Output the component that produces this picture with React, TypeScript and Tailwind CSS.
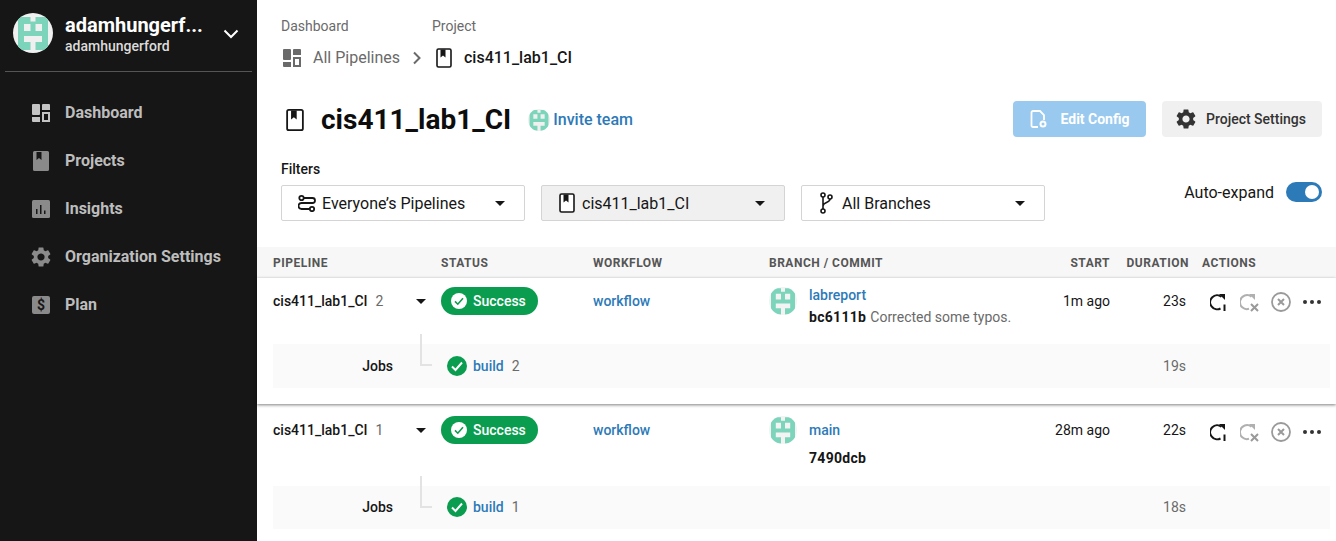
import React from "react";
import { MdSettings } from "react-icons/md";

const Face = ({ size, bg = "#f0f0f0", className = "", tight }: { size: number; bg?: string; className?: string; tight?: boolean }) => (
  <svg width={size} height={size} viewBox={tight ? "2.5 2.5 35 35" : "0 0 40 40"} className={`rounded-full ${className}`}>
    <rect width="40" height="40" fill={bg} />
    <path
      fillRule="evenodd"
      fill="#7cd5bb"
      d="M9 4h8.500v4.500h5V4H31a4 4 0 0 1 4 4v25a4 4 0 0 1-4 4h-8.500v-8h6.500v-6H11v6h6.500v8H9a4 4 0 0 1-4-4V8a4 4 0 0 1 4-4zM11 11v7h6.500v-7zM22.500 11v7H29v-7z"
    />
  </svg>
);

const DashIcon = ({ color, size = 18 }: { color: string; size?: number }) => (
  <svg width={size} height={size} viewBox="0 0 18 18" fill={color}>
    <path d="M1 0h6a1 1 0 0 1 1 1v9a1 1 0 0 1-1 1H1a1 1 0 0 1-1-1V1a1 1 0 0 1 1-1z" />
    <path d="M11 0h6a1 1 0 0 1 1 1v5H10V1a1 1 0 0 1 1-1z" />
    <path d="M0 13h8v5H1a1 1 0 0 1-1-1z" />
    <path fillRule="evenodd" d="M10 8h8v10h-8zM12 10v6h4v-6z" />
  </svg>
);

const BookOutline = ({ w = 16, h = 20 }: { w?: number; h?: number }) => (
  <svg width={w} height={h} viewBox="0 0 16 20">
    <rect x="1" y="1" width="14" height="18" rx="1.500" fill="#fff" stroke="#161616" strokeWidth="1.600" />
    <path d="M4.500 1.500h5v8l-2.500-2-2.500 2z" fill="#161616" />
  </svg>
);

const BookSolid = () => (
  <svg width="16" height="20" viewBox="0 0 16 20">
    <path
      fill="#8a8a8a"
      fillRule="evenodd"
      d="M1.500 0h13A1.500 1.500 0 0 1 16 1.500v17a1.500 1.500 0 0 1-1.500 1.500h-13A1.500 1.500 0 0 1 0 18.500v-17A1.500 1.500 0 0 1 1.500 0zM3.500 1v8l2.500-2 2.500 2V1z"
    />
  </svg>
);

const InsightsIcon = () => (
  <svg width="18" height="18" viewBox="0 0 18 18">
    <rect width="18" height="18" rx="1.500" fill="#8a8a8a" />
    <path d="M4 9h1.500v5H4zM8 5h1.500v9H8zM12 10.500h1.500V14H12z" fill="#161616" />
  </svg>
);

const Caret = ({ color = "#161616" }: { color?: string }) => (
  <svg width="10" height="5" viewBox="0 0 10 5">
    <path d="M0 0h10L5 5z" fill={color} />
  </svg>
);

const Check = ({ size, ring, tick }: { size: number; ring: string; tick: string }) => (
  <svg width={size} height={size} viewBox="0 0 20 20">
    <circle cx="10" cy="10" r="10" fill={ring} />
    <path d="M5 10.500l3.500 3.500 6.500-7.500" fill="none" stroke={tick} strokeWidth="2" />
  </svg>
);

const Retry = () => (
  <svg width="18" height="20" viewBox="0 0 18 20" fill="none">
    <path d="M11.500 4.800A7 7 0 1 0 10.500 16.500" stroke="#161616" strokeWidth="2" />
    <path d="M9 2h6v6z" fill="#161616" />
    <path d="M14.500 12.500v6.500" stroke="#161616" strokeWidth="2" />
  </svg>
);

const RetryOff = () => (
  <svg width="19" height="20" viewBox="0 0 19 20" fill="none">
    <path d="M11.500 4.800A7 7 0 1 0 9 16.800" stroke="#b0b0b0" strokeWidth="2" />
    <path d="M9 2h6v6z" fill="#b0b0b0" />
    <path d="M11 12l7 7M18 12l-7 7" stroke="#9a9a9a" strokeWidth="2" />
  </svg>
);

const Cancel = () => (
  <svg width="20" height="20" viewBox="0 0 20 20" fill="none">
    <circle cx="10" cy="10" r="9" stroke="#9a9a9a" strokeWidth="1.800" />
    <path d="M7 7l6 6M13 7l-6 6" stroke="#9a9a9a" strokeWidth="2" />
  </svg>
);

const Dots = () => (
  <svg width="18" height="4" viewBox="0 0 18 4" fill="#333">
    <circle cx="2" cy="2" r="2" />
    <circle cx="9" cy="2" r="2" />
    <circle cx="16" cy="2" r="2" />
  </svg>
);

const Nav = ({ icon, label }: { icon: React.ReactNode; label: string }) => (
  <div className="flex h-12 items-center">
    <div className="ml-[32px] mr-[15px] flex w-[18px] items-center justify-center">{icon}</div>
    <span className="text-base font-bold text-[#bdbdbd]">{label}</span>
  </div>
);

const Select = ({ icon, label, active }: { icon: React.ReactNode; label: string; active?: boolean }) => (
  <div
    className={`flex h-9 w-[244px] items-center rounded-[2px] border border-[#d4d4d4] pl-[15px] pr-[19px] ${active ? "bg-[#f0f0f0]" : "bg-white"}`}
  >
    <div className="mr-[5px] flex w-[20px] justify-center">{icon}</div>
    <span className="flex-1 pt-px text-base text-[#161616]">{label}</span>
    <Caret />
  </div>
);

const Row = ({
  name, num, branch, commit, msg, start, dur, jobDur, first,
}: {
  name: string; num: string; branch: string; commit: string; msg?: string; start: string; dur: string; jobDur: string; first?: boolean;
}) => (
  <div className={first ? "relative h-[126px] shadow-[0_1px_3px_rgba(0,0,0,0.5)]" : "relative mt-[2px] h-[135px]"}>
    <div className={`flex pl-4 ${first ? "h-[66px] pt-[9px]" : "h-[80px] pt-[10px]"}`}>
      <div className="flex h-7 w-[168px] items-center pr-[15px] text-sm">
        <span className="font-medium text-[#161616]">{name}</span>
        <span className="ml-2 flex-1 text-sm text-[#6a6a6a]">{num}</span>
        <Caret />
      </div>
      <div className="w-[152px]">
        <div className="flex h-7 w-[97px] items-center rounded-full bg-[#0a9d4f] pl-[10px]">
          <Check size={16} ring="#fff" tick="#0a9d4f" />
          <span className="ml-[6px] text-sm font-medium text-white">Success</span>
        </div>
      </div>
      <div className="flex h-7 w-[176px] items-center text-sm font-medium text-[#2d7ab8]">workflow</div>
      <div className="flex w-[269px]">
        <Face size={28} className="mr-[12px]" bg="#f3f3f3" tight />
        <div>
          <div className={`flex items-center text-sm font-medium text-[#2d7ab8] ${first ? "h-4" : "h-7"}`}>{branch}</div>
          <div className="mt-[5px] flex h-[18px] items-center text-sm">
            <span className="font-bold tracking-[0.3px] text-[#161616]">{commit}</span>
            {msg && <span className="ml-1 text-[#6a6a6a]">{msg}</span>}
          </div>
        </div>
      </div>
      <div className="flex h-7 w-[72px] items-center justify-end whitespace-nowrap text-sm text-[#161616]">{start}</div>
      <div className="flex h-7 w-[76px] items-center justify-end text-sm text-[#161616]">{dur}</div>
      <div className={`ml-[24px] flex items-center ${first ? "h-[30px]" : "h-[32px]"}`}>
        <Retry />
        <span className="ml-[12px]"><RetryOff /></span>
        <span className="ml-[12px]"><Cancel /></span>
        <span className="ml-[12px]"><Dots /></span>
      </div>
    </div>
    <div className={`ml-4 mr-[6px] flex items-center bg-[#fafafa] ${first ? "h-[44px]" : "h-[43px] pb-px"}`}>
      <div className="w-[120px] text-right text-sm font-medium text-[#161616]">Jobs</div>
      <div className="ml-[54px]"><Check size={20} ring="#0a9d4f" tick="#fff" /></div>
      <span className="ml-[6px] text-sm font-medium text-[#2d7ab8]">build</span>
      <span className="ml-2 flex-1 text-sm text-[#6a6a6a]">{num}</span>
      <span className="mr-[144px] text-sm text-[#6a6a6a]">{jobDur}</span>
    </div>
    <div className={`absolute left-[163px] h-[32px] w-[12px] border-b-2 border-l-2 border-[#e3e3e3] ${first ? "top-[56px]" : "top-[70px]"}`} />
  </div>
);

export default function App() {
  return (
    <div className="flex h-[541px] w-[1336px] overflow-hidden bg-white font-['Roboto',sans-serif]">
      <aside className="w-[257px] shrink-0 bg-[#161616]">
        <div className="mx-[5px] flex h-[72px] items-center border-b border-[#555] pb-[5px] pl-2 pr-[9px]">
          <Face size={40} />
          <div className="ml-3 flex-1 leading-none">
            <div className="text-[20px] leading-6 font-bold text-white">adamhungerf...</div>
            <div className="pt-px text-sm leading-[16px] font-medium text-[#dcdcdc]">adamhungerford</div>
          </div>
          <svg width="16" height="10" viewBox="0 0 16 10" fill="none" className="mr-1 mt-[2px]">
            <path d="M1.500 1.500L8 8l6.500-6.500" stroke="#fff" strokeWidth="2" />
          </svg>
        </div>
        <nav className="mt-[17px]">
          <Nav icon={<DashIcon color="#c4c4c4" />} label="Dashboard" />
          <Nav icon={<BookSolid />} label="Projects" />
          <Nav icon={<InsightsIcon />} label="Insights" />
          <Nav icon={<MdSettings size={24} color="#8a8a8a" className="shrink-0" />} label="Organization Settings" />
          <Nav
            icon={
              <div className="flex h-[18px] w-[18px] items-center justify-center rounded-[2px] bg-[#8a8a8a] text-sm font-bold text-[#161616]">$</div>
            }
            label="Plan"
          />
        </nav>
      </aside>
      <main className="min-w-0 flex-1">
        <div className="px-6 pt-[18px]">
          <div className="flex h-4 items-center text-sm text-[#6a6a6a]">
            <span className="w-[151px]">Dashboard</span>
            <span>Project</span>
          </div>
          <div className="mt-[14px] flex h-[20px] items-center text-base">
            <span className="ml-[2px]"><DashIcon color="#6a6a6a" /></span>
            <span className="ml-3 text-[#6a6a6a]">All Pipelines</span>
            <svg width="10" height="14" viewBox="0 0 10 14" fill="none" className="ml-[12px] mr-[14px]">
              <path d="M2 1.500L7.500 7 2 12.500" stroke="#6a6a6a" strokeWidth="2" />
            </svg>
            <BookOutline />
            <span className="ml-3 font-medium text-[#161616]">cis411_lab1_CI</span>
          </div>
          <div className="mt-[33px] flex h-[38px] items-center">
            <span className="ml-[5px]"><BookOutline w={18} h={24} /></span>
            <span className="ml-[17px] text-[28px] font-bold text-[#0d0d0d]">cis411_lab1_CI</span>
            <Face size={22} className="ml-[17px]" bg="#f0f0f0" tight />
            <span className="ml-[3px] text-base font-medium text-[#2d7ab8]">Invite team</span>
            <div className="ml-auto mb-[2px] mr-[-10px] flex gap-4">
              <div className="flex h-9 w-[133px] items-center justify-center rounded bg-[#99c9ee] text-sm font-bold text-white">
                <svg width="18" height="20" viewBox="0 0 18 20" fill="none" className="mr-[13px]">
                  <path d="M8 18H3a1.500 1.500 0 0 1-1.500-1.500v-13A1.500 1.500 0 0 1 3 2h7l4 4v5" stroke="#fff" strokeWidth="1.800" />
                  <circle cx="13" cy="15" r="2.500" stroke="#fff" strokeWidth="2" />
                </svg>
                Edit Config
              </div>
              <div className="flex h-9 w-[160px] items-center rounded bg-[#f0f0f0] pl-3 text-sm font-medium text-[#333]">
                <MdSettings size={24} color="#333" className="mr-[8px]" />
                Project Settings
              </div>
            </div>
          </div>
          <div className="mt-[22px] flex h-[16px] items-center text-sm font-medium text-[#161616]">Filters</div>
          <div className="mt-2 flex items-start gap-4">
            <Select
              label="Everyone’s Pipelines"
              icon={
                <svg width="18" height="18" viewBox="0 0 18 18" fill="none" stroke="#161616" strokeWidth="1.800">
                  <path d="M6 4h8.500a2.500 2.500 0 0 1 0 5h-11a3 3 0 0 0 0 6H11" />
                  <circle cx="3.500" cy="4" r="2.200" />
                  <circle cx="14" cy="15" r="2.200" />
                </svg>
              }
            />
            <Select label="cis411_lab1_CI" active icon={<BookOutline />} />
            <Select
              label="All Branches"
              icon={
                <svg width="14" height="22" viewBox="0 0 14 22" fill="none" stroke="#161616" strokeWidth="1.600" className="-ml-[2px]">
                  <circle cx="4" cy="19" r="2" />
                  <circle cx="4" cy="3" r="2" />
                  <circle cx="11" cy="5" r="2" />
                  <path d="M4 5v12M4 14c0-4 7-3 7-7" />
                </svg>
              }
            />
            <div className="ml-auto mr-[-10px] mt-[-5px] flex h-6 items-center">
              <span className="pt-[2px] text-base text-[#161616]">Auto-expand</span>
              <div className="ml-[12px] flex h-5 w-9 items-center justify-end rounded-full bg-[#2d7ab8] pr-[3px]">
                <div className="h-[14px] w-[14px] rounded-full bg-white" />
              </div>
            </div>
          </div>
        </div>
        <div className="mt-[26px] flex h-[31px] items-center bg-[#f7f7f7] pl-4 text-xs font-bold tracking-[0.5px] text-[#555]">
          <span className="w-[168px]">PIPELINE</span>
          <span className="w-[152px]">STATUS</span>
          <span className="w-[176px]">WORKFLOW</span>
          <span className="w-[269px]">BRANCH / COMMIT</span>
          <span className="w-[72px] text-right">START</span>
          <span className="w-[79px] text-right">DURATION</span>
          <span className="ml-[13px]">ACTIONS</span>
        </div>
        <Row first name="cis411_lab1_CI" num="2" branch="labreport" commit="bc6111b" msg="Corrected some typos." start="1m ago" dur="23s" jobDur="19s" />
        <Row name="cis411_lab1_CI" num="1" branch="main" commit="7490dcb" start="28m ago" dur="22s" jobDur="18s" />
      </main>
    </div>
  );
}
